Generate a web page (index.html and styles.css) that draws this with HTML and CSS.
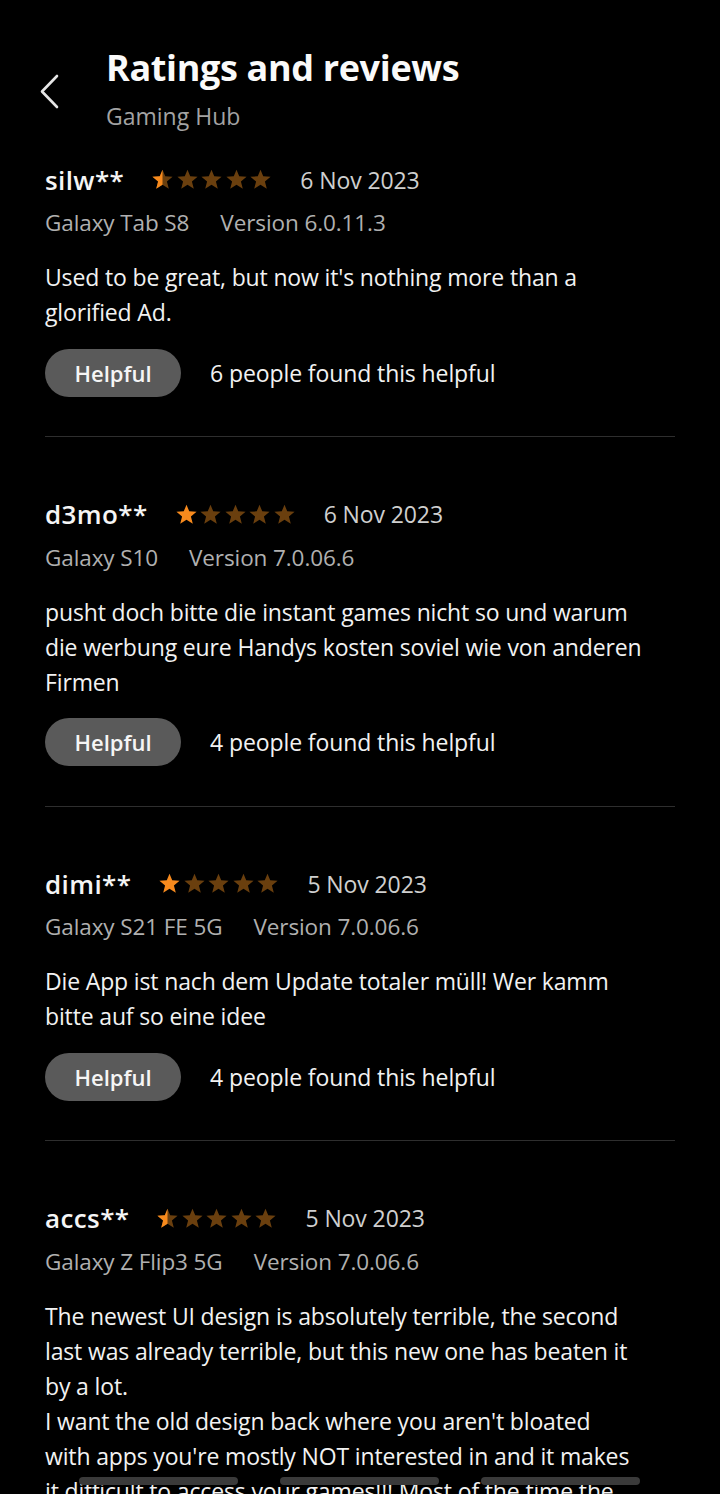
FILE: index.html
```html
<!DOCTYPE html>
<html>
<head>
<meta charset="utf-8">
<link rel="stylesheet" href="styles.css">
</head>
<body>
<header class="header">
  <div class="back">
    <svg width="24" height="40" viewBox="0 0 24 40"><path d="M18 4 L3 19.5 L18 35" fill="none" stroke="#e6e6e6" stroke-width="2.6" stroke-linecap="round" stroke-linejoin="round"/></svg>
  </div>
  <div class="titles">
    <h1 class="title">Ratings and reviews</h1>
    <div class="subtitle">Gaming Hub</div>
  </div>
</header>

<svg width="0" height="0" class="defs">
  <defs>
    <symbol id="star" viewBox="0 0 20 20"><path d="M10 0.6 L12.6 7 L19.6 7.4 L14.2 11.9 L16 18.8 L10 15 L4 18.8 L5.8 11.9 L0.4 7.4 L7.4 7 Z"/></symbol>
    <clipPath id="half"><rect x="0" y="0" width="10" height="20"/></clipPath>
  </defs>
</svg>

<main class="list">
  <section class="review">
    <div class="row-top">
      <span class="name">silw**</span>
      <span class="stars">
        <svg class="star" viewBox="0 0 20 20"><use href="#star" class="off"/><g clip-path="url(#half)"><use href="#star" class="on"/></g></svg>
        <svg class="star" viewBox="0 0 20 20"><use href="#star" class="off"/></svg>
        <svg class="star" viewBox="0 0 20 20"><use href="#star" class="off"/></svg>
        <svg class="star" viewBox="0 0 20 20"><use href="#star" class="off"/></svg>
        <svg class="star" viewBox="0 0 20 20"><use href="#star" class="off"/></svg>
      </span>
      <span class="date">6 Nov 2023</span>
    </div>
    <div class="row-meta"><span>Galaxy Tab S8</span><span>Version 6.0.11.3</span></div>
    <p class="body">Used to be great, but now it's nothing more than a<br>glorified Ad.</p>
    <div class="row-help"><span class="helpful">Helpful</span><span class="count">6 people found this helpful</span></div>
  </section>

  <section class="review">
    <div class="row-top">
      <span class="name">d3mo**</span>
      <span class="stars">
        <svg class="star" viewBox="0 0 20 20"><use href="#star" class="on"/></svg>
        <svg class="star" viewBox="0 0 20 20"><use href="#star" class="off"/></svg>
        <svg class="star" viewBox="0 0 20 20"><use href="#star" class="off"/></svg>
        <svg class="star" viewBox="0 0 20 20"><use href="#star" class="off"/></svg>
        <svg class="star" viewBox="0 0 20 20"><use href="#star" class="off"/></svg>
      </span>
      <span class="date">6 Nov 2023</span>
    </div>
    <div class="row-meta"><span>Galaxy S10</span><span>Version 7.0.06.6</span></div>
    <p class="body">pusht doch bitte die instant games nicht so und warum<br>die werbung eure Handys kosten soviel wie von anderen<br>Firmen</p>
    <div class="row-help"><span class="helpful">Helpful</span><span class="count">4 people found this helpful</span></div>
  </section>

  <section class="review">
    <div class="row-top">
      <span class="name">dimi**</span>
      <span class="stars">
        <svg class="star" viewBox="0 0 20 20"><use href="#star" class="on"/></svg>
        <svg class="star" viewBox="0 0 20 20"><use href="#star" class="off"/></svg>
        <svg class="star" viewBox="0 0 20 20"><use href="#star" class="off"/></svg>
        <svg class="star" viewBox="0 0 20 20"><use href="#star" class="off"/></svg>
        <svg class="star" viewBox="0 0 20 20"><use href="#star" class="off"/></svg>
      </span>
      <span class="date">5 Nov 2023</span>
    </div>
    <div class="row-meta"><span>Galaxy S21 FE 5G</span><span>Version 7.0.06.6</span></div>
    <p class="body">Die App ist nach dem Update totaler müll! Wer kamm<br>bitte auf so eine idee</p>
    <div class="row-help"><span class="helpful">Helpful</span><span class="count">4 people found this helpful</span></div>
  </section>

  <section class="review last">
    <div class="row-top">
      <span class="name">accs**</span>
      <span class="stars">
        <svg class="star" viewBox="0 0 20 20"><use href="#star" class="off"/><g clip-path="url(#half)"><use href="#star" class="on"/></g></svg>
        <svg class="star" viewBox="0 0 20 20"><use href="#star" class="off"/></svg>
        <svg class="star" viewBox="0 0 20 20"><use href="#star" class="off"/></svg>
        <svg class="star" viewBox="0 0 20 20"><use href="#star" class="off"/></svg>
        <svg class="star" viewBox="0 0 20 20"><use href="#star" class="off"/></svg>
      </span>
      <span class="date">5 Nov 2023</span>
    </div>
    <div class="row-meta"><span>Galaxy Z Flip3 5G</span><span>Version 7.0.06.6</span></div>
    <p class="body">The newest UI design is absolutely terrible, the second<br>last was already terrible, but this new one has beaten it<br>by a lot.<br>I want the old design back where you aren't bloated<br>with apps you're mostly NOT interested in and it makes<br>it difficult to access your games!!! Most of the time the</p>
  </section>
</main>

<div class="nav-hints">
  <span class="hint"></span><span class="hint"></span><span class="hint"></span>
</div>
</body>
</html>
```

FILE: styles.css
```css
html, body {
  margin: 0;
  padding: 0;
  background: #000;
}
body {
  width: 720px;
  height: 1494px;
  overflow: hidden;
  position: relative;
  font-family: "Open Sans", "Noto Sans", sans-serif;
  color: #f2f2f2;
}
.defs {
  position: absolute;
  width: 0;
  height: 0;
}
.header {
  display: flex;
  padding-top: 46px;
}
.back {
  padding-left: 39px;
  padding-top: 26px;
  box-sizing: border-box;
  width: 106px;
}
.back svg {
  display: block;
}
.titles {
  display: flex;
  flex-direction: column;
  gap: 10px;
}
.title {
  margin: 0;
  font-size: 36px;
  line-height: 44px;
  font-weight: 700;
  color: #fafafa;
  letter-spacing: -0.35px;
}
.subtitle {
  font-size: 23px;
  line-height: 32px;
  color: #a3a3a3;
  font-weight: 500;
}
.list {
  padding-top: 26px;
}
.review {
  margin: 0 45px 55.5px;
  padding-bottom: 39.5px;
  border-bottom: 1px solid #2e2e2e;
}
.review.last {
  border-bottom: none;
}
.row-top {
  display: flex;
  align-items: center;
  height: 43px;
}
.name {
  font-size: 26px;
  font-weight: 600;
  color: #f5f5f5;
  letter-spacing: 0.4px;
}
.stars {
  display: flex;
  gap: 3.5px;
  margin-left: 28px;
  margin-right: 29px;
}
.star {
  width: 21px;
  height: 21px;
  display: block;
}
.off {
  fill: #6a3f0e;
}
.on {
  fill: #f78a1d;
}
.date {
  font-size: 23px;
  font-weight: 500;
  color: #cfcfcf;
  letter-spacing: -0.1px;
}
.row-meta {
  display: flex;
  gap: 31px;
  height: 43px;
  align-items: center;
  font-size: 22.5px;
  font-weight: 500;
  color: #b0b0b0;
  letter-spacing: -0.1px;
}
.body {
  margin: 16px 0 0;
  font-size: 23px;
  line-height: 35px;
  font-weight: 500;
  color: #f2f2f2;
  letter-spacing: -0.15px;
}
.row-help {
  display: flex;
  align-items: center;
  margin-top: 18.5px;
  gap: 29px;
}
.helpful {
  width: 136px;
  height: 48px;
  border-radius: 24px;
  background: #5a5a5a;
  display: flex;
  align-items: center;
  justify-content: center;
  font-size: 22px;
  font-weight: 600;
  color: #f5f5f5;
}
.count {
  font-size: 23px;
  font-weight: 500;
  color: #f2f2f2;
  letter-spacing: -0.1px;
}
.nav-hints {
  position: absolute;
  top: 1477px;
  left: 79px;
  display: flex;
  gap: 42px;
}
.hint {
  width: 159px;
  height: 8px;
  border-radius: 4px;
  background: #3a3a3a;
}
```
